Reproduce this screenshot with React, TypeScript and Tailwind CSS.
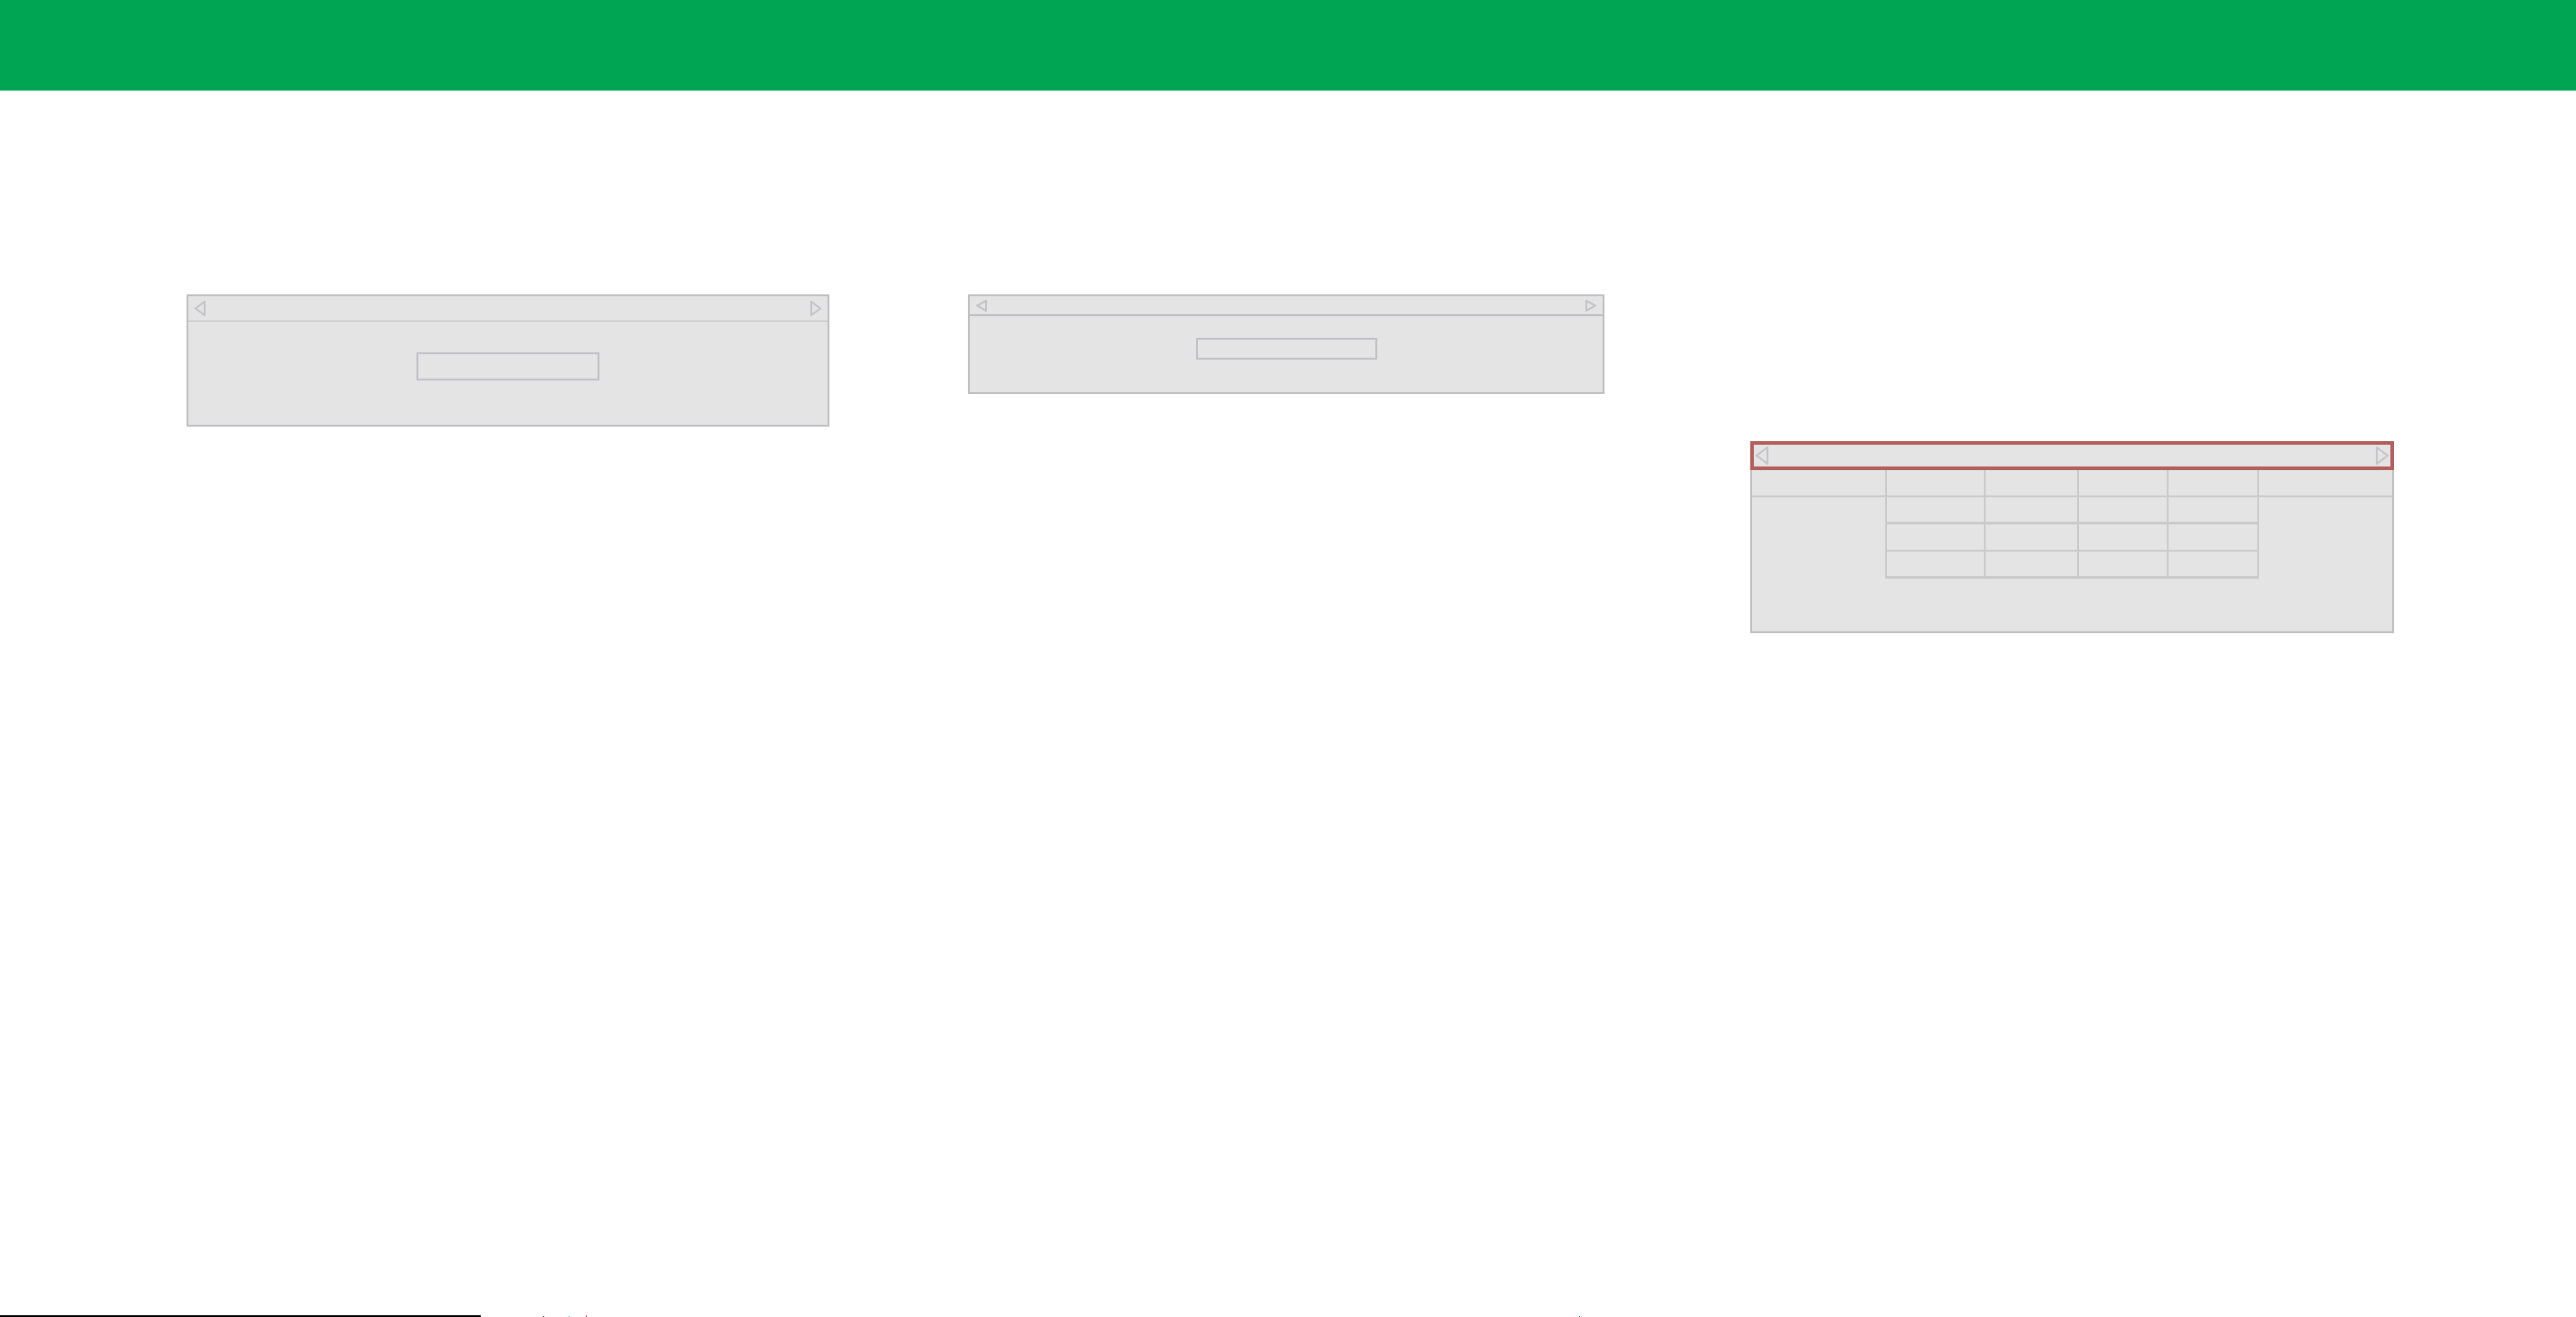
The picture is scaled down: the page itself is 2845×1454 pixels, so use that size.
import React from 'react'

// Hollow triangle used as the prev / next control in carousel headers
function Arrow({ dir, w, h }: { dir: 'left' | 'right'; w: number; h: number }) {
  const pts = dir === 'left' ? `${w - 1},1 1,${h / 2} ${w - 1},${h - 1}` : `1,1 ${w - 1},${h / 2} 1,${h - 1}`
  return (
    <svg width={w} height={h} viewBox={`0 0 ${w} ${h}`} className="shrink-0">
      <polygon points={pts} fill="none" stroke="#c3c3c7" strokeWidth={2} strokeLinejoin="miter" />
    </svg>
  )
}

function SimplePanel({
  width,
  height,
  headerH,
  headerLine,
  arrowW,
  arrowH,
  boxW,
  boxH,
  boxTop,
}: {
  width: number
  height: number
  headerH: string
  headerLine: string
  arrowW: number
  arrowH: number
  boxW: string
  boxH: string
  boxTop: string
}) {
  return (
    <div
      className="shrink-0 flex flex-col border-2 border-[#bebec2] bg-[#e4e4e4]"
      style={{ width, height }}
    >
      <div className={`${headerH} ${headerLine} flex items-center justify-between px-[7px] border-[#bebec2]`}>
        <Arrow dir="left" w={arrowW} h={arrowH} />
        <Arrow dir="right" w={arrowW} h={arrowH} />
      </div>
      <div className={`flex justify-center ${boxTop}`}>
        <div className={`${boxW} ${boxH} border-2 border-[#c0c0c4]`}></div>
      </div>
    </div>
  )
}

const headCols = ['w-[149px]', 'w-[109px]', 'w-[103px]', 'w-[99px]', 'w-[100px]']
const gridCols = ['w-[109px]', 'w-[103px]', 'w-[99px]', 'w-[100px]']
const gridRows = ['h-[30px] border-b-[3px]', 'h-[30px] border-b-2', 'h-[27px]']

function SchedulePanel() {
  return (
    <div className="w-[711px] shrink-0 flex flex-col">
      <div className="h-[32px] border-4 border-[#b35e5a] bg-[#e4e4e4] flex items-center justify-between px-[2px]">
        <Arrow dir="left" w={14} h={20} />
        <Arrow dir="right" w={14} h={20} />
      </div>
      <div className="h-[180px] border-x-2 border-b-2 border-[#bebec2] bg-[#e4e4e4] flex flex-col">
        {/* column header row */}
        <div className="h-[30px] flex border-b-2 border-[#cacaca]">
          {headCols.map((c, i) => (
            <div key={i} className={`${c} h-full border-r-2 border-[#cacaca]`}></div>
          ))}
          <div className="flex-1"></div>
        </div>
        {/* time grid */}
        <div className="flex">
          <div className="w-[147px] shrink-0"></div>
          <div className="flex flex-col border-l-2 border-b-[3px] border-[#cacaca]">
            {gridRows.map((r, i) => (
              <div key={i} className={`flex ${r} border-[#cacaca]`}>
                {gridCols.map((c, j) => (
                  <div key={j} className={`${c} h-full border-r-2 border-[#cacaca]`}></div>
                ))}
              </div>
            ))}
          </div>
        </div>
      </div>
    </div>
  )
}

export default function App() {
  return (
    <main className="w-[2845px] h-[1454px] bg-white flex flex-col overflow-hidden font-['Liberation_Sans',sans-serif]">
      <header className="h-[100px] w-full bg-[#00a553] shrink-0"></header>

      <section className="flex items-start pl-[206px] pt-[225px]">
        <SimplePanel
          width={710}
          height={146}
          headerH="h-[28px]"
          headerLine="border-b"
          arrowW={12}
          arrowH={17}
          boxW="w-[202px]"
          boxH="h-[31px]"
          boxTop="pt-[34px]"
        />
        <div className="ml-[153px]">
          <SimplePanel
            width={703}
            height={110}
            headerH="h-[22px]"
            headerLine="border-b-2"
            arrowW={12}
            arrowH={13}
            boxW="w-[200px]"
            boxH="h-[24px]"
            boxTop="pt-[24px]"
          />
        </div>
        <div className="ml-[161px] mt-[162px]">
          <SchedulePanel />
        </div>
      </section>

      <footer className="mt-auto h-[2px] flex items-end shrink-0">
        <div className="w-[531px] h-[2px] bg-black"></div>
        <span className="ml-[69px] w-px h-px bg-[#333333]"></span>
        <span className="ml-[27px] w-px h-px bg-[#2aa6a6]"></span>
        <span className="ml-[18px] w-px h-[2px] bg-[#c0306a]"></span>
        <span className="ml-[1096px] w-px h-px bg-[#2a6a9a]"></span>
      </footer>
    </main>
  )
}
